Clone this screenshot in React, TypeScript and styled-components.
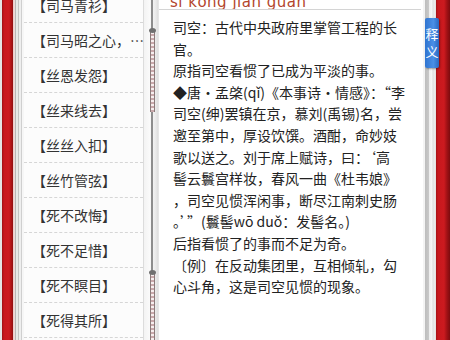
import React from "react";
import styled, { createGlobalStyle } from "styled-components";

const GlobalStyle = createGlobalStyle`
    html, body {
        margin: 0;
        padding: 0;
        background: #fff;
    }
    body {
        font-family: "Noto Sans CJK SC", "Noto Sans", sans-serif;
    }
`

const Book = styled.div`
    display: flex;
    flex-direction: row;
    width: 450px;
    height: 340px;
    overflow: hidden;
    background: #fff;
`

const LeftEdge = styled.div`
    width: 24px;
    flex-shrink: 0;
    background: linear-gradient(90deg,
        #e4e4e4 0px, #e4e4e4 2px,
        #9e1014 2px, #c8181d 4px, #cc1a1f 9px, #a31115 12px, #8c0d10 13px,
        #e9c9c9 13px, #f2dede 15px,
        #b8b8b8 15px, #b8b8b8 16px,
        #e8e8e8 16px, #e8e8e8 18px,
        #c4c4c4 18px, #c4c4c4 19px,
        #eeeeee 19px, #eeeeee 21px,
        #cfcfcf 21px, #cfcfcf 22px,
        #f6f6f6 22px);
`

const ListPane = styled.div`
    width: 119px;
    flex-shrink: 0;
    overflow: hidden;
    background: #fcfcfc;
    border-right: 1px solid #dcdcdc;
`

const ListInner = styled.div`
    display: flex;
    flex-direction: column;
    margin-top: -12px;
`

const Item = styled.div`
    height: 35px;
    display: flex;
    align-items: center;
    padding-left: 8px;
    border-bottom: 1px dashed #d6d6d6;
    box-sizing: border-box;
    font-size: 14px;
    color: #333;
    white-space: nowrap;
    overflow: hidden;
`

const Spine = styled.div`
    width: 14px;
    flex-shrink: 0;
    display: flex;
    flex-direction: column;
    align-items: center;
    background: linear-gradient(90deg, #f3f3f3, #fafafa 40%, #ececec 80%, #dedede);
    padding-left: 2px;
    box-sizing: border-box;
`

const Wire = styled.div<{ h?: number }>`
    width: 2px;
    height: ${p => (p.h ? p.h + "px" : "auto")};
    flex: ${p => (p.h ? "none" : "1")};
    background: #8d8d8d;
`

const Chain = styled.div<{ h?: number }>`
    position: relative;
    width: 5px;
    height: ${p => (p.h ? p.h + "px" : "auto")};
    flex: ${p => (p.h ? "none" : "1")};
    box-sizing: border-box;
    border-left: 1px solid #8a7a7a;
    border-right: 1px solid #8a7a7a;
    background: repeating-linear-gradient(180deg, #c9a9ab 0px, #c9a9ab 2px, #f6eeee 2px, #f6eeee 4px);
    &::before {
        content: "";
        position: absolute;
        left: -2px;
        top: -2px;
        width: 7px;
        height: 5px;
        border-radius: 50%;
        background: #6f6f6f;
    }
`

const Page = styled.div`
    width: 265px;
    flex-shrink: 0;
    display: flex;
    flex-direction: column;
    background: #fff;
    border-left: 1px solid #e6e6e6;
    box-sizing: border-box;
`

const Pinyin = styled.div`
    height: 9px;
    overflow: hidden;
    display: flex;
    align-items: flex-end;
    padding-left: 11px;
    border-bottom: 1px solid #d4d4d4;
    margin-right: 2px;
    span {
        font-family: "DejaVu Sans", sans-serif;
        font-size: 15px;
        line-height: 15px;
        color: #b3452c;
        margin-bottom: -1px;
        letter-spacing: 0.5px;
    }
`

const Body = styled.div`
    padding: 7px 0 0 14px;
    font-size: 14px;
    line-height: 21.6px;
    color: #222;
`

const Line = styled.div`
    white-space: nowrap;
`

const RightEdge = styled.div`
    position: relative;
    flex: 1;
    background: linear-gradient(90deg,
        #f4f4f4 0px, #f4f4f4 2px,
        #bdbdbd 2px, #c9c9c9 6px,
        #ececec 6px, #f7f7f7 9px, #d8d8d8 10px, #efefef 11px, #e0e0e0 13px,
        #a51216 13px, #c8181d 15px, #cc1a1f 21px, #a01115 24px, #7d0b0e 27px);
`

const Tab = styled.div`
    position: absolute;
    left: 2px;
    top: 18px;
    width: 14px;
    height: 50px;
    display: flex;
    flex-direction: column;
    align-items: center;
    justify-content: center;
    background: linear-gradient(90deg, #2f74d0, #4a8fe6 60%, #2a68c0);
    border-radius: 2px;
    box-shadow: 1px 1px 2px rgba(0,0,0,0.35);
    color: #fff;
    font-size: 13px;
    line-height: 18px;
`

const words = [
    "【司马青衫】",
    "【司马昭之心，…",
    "【丝恩发怨】",
    "【丝来线去】",
    "【丝丝入扣】",
    "【丝竹管弦】",
    "【死不改悔】",
    "【死不足惜】",
    "【死不瞑目】",
    "【死得其所】",
]

const lines = [
    "司空：古代中央政府里掌管工程的长",
    "官。",
    "原指司空看惯了已成为平淡的事。",
    "◆唐·孟棨(qǐ)《本事诗·情感》：“李",
    "司空(绅)罢镇在京，慕刘(禹锡)名，尝",
    "邀至第中，厚设饮馔。酒酣，命妙妓",
    "歌以送之。刘于席上赋诗，曰：‘高",
    "髻云鬟宫样妆，春风一曲《杜韦娘》",
    "，司空见惯浑闲事，断尽江南刺史肠",
    "。’”(鬟髻wō duǒ：发髻名。)",
    "后指看惯了的事而不足为奇。",
    "〔例〕在反动集团里，互相倾轧，勾",
    "心斗角，这是司空见惯的现象。",
]

const App = () => {
    return (
        <>
            <GlobalStyle />
            <Book>
                <LeftEdge />
                <ListPane>
                    <ListInner>
                        {words.map(w => <Item key={w}>{w}</Item>)}
                    </ListInner>
                </ListPane>
                <Spine>
                    <Wire h={30} />
                    <Chain h={82} />
                    <Wire h={160} />
                    <Chain />
                </Spine>
                <Page>
                    <Pinyin><span>sī kōng jiàn guàn</span></Pinyin>
                    <Body>
                        {lines.map((l, i) => <Line key={i}>{l}</Line>)}
                    </Body>
                </Page>
                <RightEdge>
                    <Tab><span>释</span><span>义</span></Tab>
                </RightEdge>
            </Book>
        </>
    )
}

export default App;
